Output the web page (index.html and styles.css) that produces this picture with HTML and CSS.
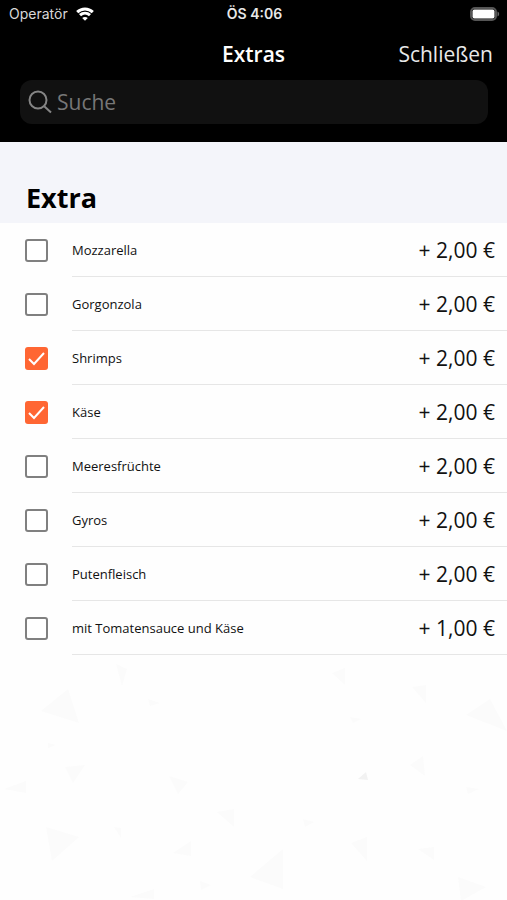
FILE: index.html
```html
<!DOCTYPE html>
<html lang="de">
<head>
<meta charset="utf-8">
<meta name="viewport" content="width=device-width, initial-scale=1">
<title>Extras</title>
<link rel="stylesheet" href="styles.css">
</head>
<body>
<header class="top">
  <div class="status">
    <div class="carrier">
      <span>Operatör</span>
      <svg class="wifi" viewBox="0 0 18 14" aria-hidden="true">
        <path d="M1.200 5.200C5.600 1 12.400 1 16.800 5.200" />
        <path d="M4 8.200c2.900-2.700 7.100-2.700 10 0" />
        <path class="dot" d="M9 13.800 6.200 11c1.600-1.500 4-1.500 5.600 0z" />
      </svg>
    </div>
    <span class="clock">ÖS 4:06</span>
    <svg class="battery" viewBox="0 0 30 14" aria-hidden="true">
      <rect class="shell" x="1" y="1" width="25" height="12" rx="4" />
      <rect class="charge" x="2.500" y="2.500" width="22" height="9" rx="2" />
      <path class="tip" d="M27.500 4.500c2.200.7 2.200 4.300 0 5z" />
    </svg>
  </div>
  <div class="nav">
    <h1 class="title">Extras</h1>
    <button class="close" type="button">Schließen</button>
  </div>
  <label class="search">
    <svg class="lens" viewBox="0 0 24 24" aria-hidden="true">
      <circle cx="10" cy="10" r="8.500" />
      <path d="M16.200 16.200 23 22.500" />
    </svg>
    <input type="search" placeholder="Suche" aria-label="Suche">
  </label>
</header>
<main class="content">
  <h2 class="section">Extra</h2>
  <ul class="list">
    <li><label class="row"><input type="checkbox"><span class="line"><span class="name">Mozzarella</span><span class="price">+ 2,00 €</span></span></label></li>
    <li><label class="row"><input type="checkbox"><span class="line"><span class="name">Gorgonzola</span><span class="price">+ 2,00 €</span></span></label></li>
    <li><label class="row"><input type="checkbox" checked><span class="line"><span class="name">Shrimps</span><span class="price">+ 2,00 €</span></span></label></li>
    <li><label class="row"><input type="checkbox" checked><span class="line"><span class="name">Käse</span><span class="price">+ 2,00 €</span></span></label></li>
    <li><label class="row"><input type="checkbox"><span class="line"><span class="name">Meeresfrüchte</span><span class="price">+ 2,00 €</span></span></label></li>
    <li><label class="row"><input type="checkbox"><span class="line"><span class="name">Gyros</span><span class="price">+ 2,00 €</span></span></label></li>
    <li><label class="row"><input type="checkbox"><span class="line"><span class="name">Putenfleisch</span><span class="price">+ 2,00 €</span></span></label></li>
    <li><label class="row"><input type="checkbox"><span class="line"><span class="name">mit Tomatensauce und Käse</span><span class="price">+ 1,00 €</span></span></label></li>
  </ul>
  <svg class="pattern" viewBox="0 0 507 246" preserveAspectRatio="xMidYMin slice" aria-hidden="true">
    <path d="M41 56 68 34 79 68zM466 60 490 44 507 76zM250 222 283 194V234zM458 222 486 232 461 246zM46 172 79 182 52 206z" />
    <path d="M116 9 127 14 122 31zM148 44l12 4-10 3zM332 18l13-5v17zM412 32l14-2v18zM65 112l20-2-12 18zM169 121l19 6-10 12zM217 157l17-3v18zM351 188l16-6v24zM410 110l13-9 2 20zM173 198l18-12v15zM4 134l22-8v12zM114 172l7 1v10zM418 194l16-2v13zM466 132l13 2-11 5zM303 164l11 3-9 5zM200 226l11 4-10 5zM130 242l24-8v10zM350 62l11 2-8 4zM48 88l8 2-8 3z" />
    <path class="strong" d="m358 124 8-7 2 8z" />
  </svg>
</main>
</body>
</html>
```
FILE: styles.css
```css
* {
  box-sizing: border-box;
}

body {
  margin: 0;
  min-height: 100vh;
  display: flex;
  flex-direction: column;
  background: #fefefe;
  color: #111;
  font-family: "Open Sans", "Noto Sans", sans-serif;
}

.top {
  background: #000;
  color: #fff;
  padding-bottom: 18px;
}

.status {
  display: grid;
  grid-template-columns: 1fr auto 1fr;
  align-items: center;
  height: 28px;
  padding: 0 7px 0 9px;
  font: 500 14px/20px Inter, sans-serif;
}

.carrier {
  display: flex;
  align-items: center;
  gap: 8px;
  color: #d8d8d8;
  font-weight: 400;
}

.clock {
  font-weight: 600;
  color: #e8e8e8;
}

.wifi {
  width: 18px;
  height: 14px;
  fill: none;
  stroke: #fff;
  stroke-width: 3px;
}

.wifi .dot {
  fill: #fff;
  stroke: none;
}

.battery {
  justify-self: end;
  width: 30px;
  height: 14px;
}

.shell {
  fill: none;
  stroke: #555;
  stroke-width: 2px;
}

.charge {
  fill: #fff;
}

.tip {
  fill: #666;
}

.nav {
  display: grid;
  grid-template-columns: 1fr auto 1fr;
  align-items: center;
  height: 52px;
  padding: 0 14px;
}

.title {
  grid-column: 2;
  margin: 0;
  font-size: 21px;
  line-height: 28px;
  font-weight: 600;
}

.close {
  justify-self: end;
  padding: 0;
  border: 0;
  background: none;
  color: #e8e8e8;
  font: 400 21px/28px "Open Sans", "Noto Sans", sans-serif;
}

.search {
  display: flex;
  align-items: center;
  gap: 5px;
  height: 44px;
  margin: 0 19px 0 20px;
  padding: 0 8px;
  border-radius: 12px;
  background: #111;
}

.lens {
  flex: none;
  width: 24px;
  height: 24px;
  fill: none;
  stroke: #858585;
  stroke-width: 2px;
}

.search input {
  flex: 1;
  min-width: 0;
  padding: 0;
  border: 0;
  outline: 0;
  appearance: none;
  background: none;
  color: #fff;
  font: 400 21px/28px "Open Sans", "Noto Sans", sans-serif;
}

.search input::placeholder {
  color: #777;
  opacity: 1;
}

.content {
  flex: 1;
  display: flex;
  flex-direction: column;
}

.section {
  margin: 0;
  padding: 38px 26px 8px;
  background: #f4f5fa;
  color: #000;
  font-size: 27px;
  line-height: 35px;
  font-weight: 700;
}

.list {
  margin: 0;
  padding: 0;
  list-style: none;
}

.row {
  display: flex;
  align-items: center;
  gap: 24px;
  padding-left: 25px;
}

.row input {
  flex: none;
  width: 23px;
  height: 23px;
  margin: 0;
  appearance: none;
  border: 2px solid #808080;
  border-radius: 3px;
  background: #fff;
}

.row input:checked {
  border: 0;
  background: #ff6633 url("data:image/svg+xml,%3Csvg xmlns='http://www.w3.org/2000/svg' viewBox='0 0 23 23'%3E%3Cpath d='M4 12l5 5L19 6' fill='none' stroke='white' stroke-width='2'/%3E%3C/svg%3E") center / 23px 23px;
}

.line {
  flex: 1;
  display: flex;
  align-items: center;
  justify-content: space-between;
  gap: 12px;
  min-height: 54px;
  padding-right: 12px;
  border-bottom: 1px solid #e6e6e6;
}

.name {
  font-size: 13px;
  line-height: 18px;
}

.price {
  font-size: 21px;
  line-height: 28px;
  white-space: nowrap;
}

.pattern {
  flex: 1;
  width: 100%;
  min-height: 0;
  height: 0;
  fill: #fbfbfb;
}

.pattern .strong {
  fill: #f2f2f2;
}
```
